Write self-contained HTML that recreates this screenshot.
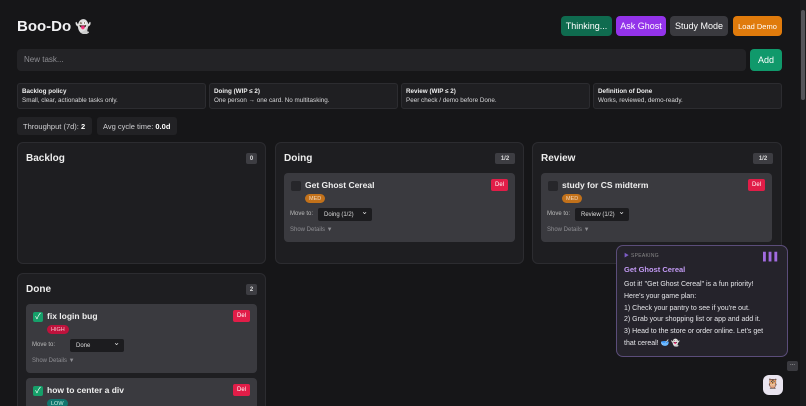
<!DOCTYPE html>
<html style="width:806px;height:406px;overflow:hidden"><head><meta charset="utf-8"><style>
*{box-sizing:border-box;margin:0;padding:0}
body{width:806px;height:406px;overflow:hidden;background:#161618;font-family:"Liberation Sans","Noto Sans CJK JP",sans-serif;color:#e8e8ea;position:relative}
.a{position:absolute}
.btn{position:absolute;top:16px;height:20px;border-radius:4px;font-size:9px;color:#fff;display:flex;align-items:center;justify-content:center}
.pol{position:absolute;top:83px;height:26px;width:189px;background:#1f1f22;border:1px solid #2c2c30;border-radius:3px;padding:4px 4px;font-size:6.3px;line-height:8.5px;color:#d8d8da}
.pol b{display:block;color:#eee}
.stat{position:absolute;top:117px;height:18px;background:#222225;border-radius:3px;font-size:7.5px;display:flex;align-items:center;padding:0 6px;color:#cfcfd2}
.col{position:absolute;background:#1e1e21;border:1px solid #2c2c30;border-radius:6px;overflow:hidden}
.col h3{position:absolute;left:8px;top:10px;font-size:10px;font-weight:bold;color:#eee}
.cnt{position:absolute;top:10px;height:11px;background:#3d3d42;border-radius:2px;font-size:6px;font-weight:bold;display:flex;align-items:center;justify-content:center;color:#ddd}
.card{position:absolute;background:#3a3a3f;border-radius:4px;width:231px}
.chk{position:absolute;left:7px;top:8px;width:10px;height:10px;border-radius:2px;background:#26262a}
.chk.on{background:#16a06a;color:#fff;font-size:8px;line-height:10px;text-align:center}
.tt{position:absolute;left:21px;top:7px;font-size:8.5px;font-weight:bold;color:#eee}
.del{position:absolute;right:7px;top:6px;width:17px;height:12px;background:#e11d48;border-radius:2px;font-size:6px;color:#fff;display:flex;align-items:center;justify-content:center}
.tag{position:absolute;left:21px;top:21px;height:9px;border-radius:5px;font-size:5.5px;color:#f3d9c0;display:flex;align-items:center;padding:0 4px}
.mv{position:absolute;left:6px;top:38px;font-size:6px;color:#bbb}
.sel{position:absolute;top:35px;height:13px;background:#1c1c1f;border-radius:2px;font-size:6px;color:#ddd;display:flex;align-items:center;padding-left:6px}
.sel:after{content:"⌄";position:absolute;right:4px;top:-1px;font-size:8px}
.sd{position:absolute;left:6px;top:54px;font-size:6px;color:#8e8e93}
</style></head><body>
<div class="a" style="left:17px;top:18px;font-size:15px;font-weight:bold;color:#f2f2f4">Boo-Do <span style="font-size:13px">👻</span></div>
<div class="btn" style="left:561px;width:51px;background:#0f6b4f">Thinking...</div>
<div class="btn" style="left:616px;width:50px;background:#9333ea">Ask Ghost</div>
<div class="btn" style="left:670px;width:58px;background:#3a3a3f">Study Mode</div>
<div class="btn" style="left:733px;width:49px;background:#e07b0c;font-size:7.5px">Load Demo</div>
<div class="a" style="left:17px;top:49px;width:729px;height:22px;background:#232326;border-radius:4px;font-size:8px;color:#8e8e93;padding:6px 7px">New task...</div>
<div class="btn" style="left:750px;top:49px;width:32px;height:22px;background:#10996b">Add</div>
<div class="pol" style="left:17px"><b>Backlog policy</b>Small, clear, actionable tasks only.</div>
<div class="pol" style="left:209px"><b>Doing (WIP ≤ 2)</b>One person → one card. No multitasking.</div>
<div class="pol" style="left:401px"><b>Review (WIP ≤ 2)</b>Peer check / demo before Done.</div>
<div class="pol" style="left:593px"><b>Definition of Done</b>Works, reviewed, demo-ready.</div>
<div class="stat" style="left:17px;width:75px">Throughput (7d):&nbsp;<b style="color:#fff">2</b></div>
<div class="stat" style="left:97px;width:80px">Avg cycle time:&nbsp;<b style="color:#fff">0.0d</b></div>

<div class="col" style="left:17px;top:142px;width:249px;height:122px"><h3>Backlog</h3><div class="cnt" style="left:228px;width:11px">0</div></div>

<div class="col" style="left:275px;top:142px;width:249px;height:122px"><h3>Doing</h3><div class="cnt" style="left:219px;width:20px">1/2</div>
<div class="card" style="left:8px;top:30px;height:69px"><div class="chk"></div><div class="tt">Get Ghost Cereal</div><div class="del">Del</div><div class="tag" style="background:#c2711a">MED</div><div class="mv">Move to:</div><div class="sel" style="left:34px;width:54px">Doing (1/2)</div><div class="sd">Show Details ▼</div></div></div>

<div class="col" style="left:532px;top:142px;width:250px;height:122px"><h3>Review</h3><div class="cnt" style="left:220px;width:20px">1/2</div>
<div class="card" style="left:8px;top:30px;height:69px"><div class="chk"></div><div class="tt">study for CS midterm</div><div class="del">Del</div><div class="tag" style="background:#c2711a">MED</div><div class="mv">Move to:</div><div class="sel" style="left:34px;width:54px">Review (1/2)</div><div class="sd">Show Details ▼</div></div></div>

<div class="col" style="left:17px;top:273px;width:249px;height:150px"><h3>Done</h3><div class="cnt" style="left:228px;width:11px">2</div>
<div class="card" style="left:8px;top:30px;height:69px"><div class="chk on">✓</div><div class="tt">fix login bug</div><div class="del">Del</div><div class="tag" style="background:#be123c;color:#f6c6d0">HIGH</div><div class="mv">Move to:</div><div class="sel" style="left:44px;width:54px">Done</div><div class="sd">Show Details ▼</div></div>
<div class="card" style="left:8px;top:104px;height:40px"><div class="chk on">✓</div><div class="tt">how to center a div</div><div class="del">Del</div><div class="tag" style="background:#0f766e;color:#c9f0e0">LOW</div></div></div>

<div class="a" style="left:616px;top:245px;width:172px;height:112px;background:#25232b;border:1px solid #5b4d7a;border-radius:7px;padding:6px 7px">
<div style="font-size:5px;color:#888;letter-spacing:.3px"><span style="color:#7c5cc4">▶</span> SPEAKING<span style="float:right;color:#a26be0;font-size:8px;font-weight:bold;letter-spacing:0">▌▌▌</span></div>
<div style="font-size:7.5px;font-weight:bold;color:#c39af5;margin-top:6px">Get Ghost Cereal</div>
<div style="font-size:7px;line-height:11.8px;color:#e6e6ea;margin-top:5px">Got it! "Get Ghost Cereal" is a fun priority!<br>Here's your game plan:<br>1) Check your pantry to see if you're out.<br>2) Grab your shopping list or app and add it.<br>3) Head to the store or order online. Let's get<br>that cereal! 🥣 👻</div></div>
<div class="a" style="left:787px;top:361px;width:11px;height:10px;background:#3a3a3f;border-radius:2px;font-size:6px;color:#ccc;text-align:center;line-height:6px">...</div>
<div class="a" style="left:763px;top:375px;width:20px;height:20px;background:#e9e4ef;border-radius:6px;font-size:10px;text-align:center;line-height:20px">🦉</div>
<div class="a" style="left:800px;top:0;width:6px;height:406px;background:#1c1c1e"></div>
<div class="a" style="left:801px;top:10px;width:4px;height:90px;background:#55555a;border-radius:2px"></div>
</body></html>
